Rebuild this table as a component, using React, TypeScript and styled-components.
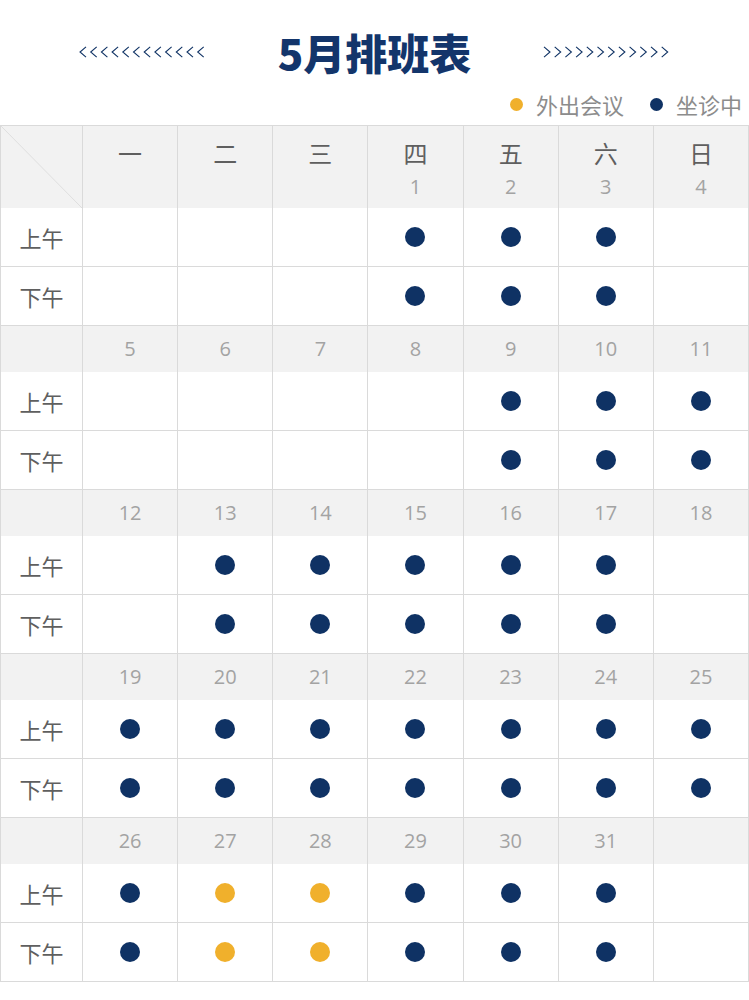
import React from 'react';
import styled, { createGlobalStyle } from 'styled-components';

const NAVY = '#0f3264';
const GOLD = '#f0b02c';
const LINE = '#dadada';
const GRAY_BG = '#f2f2f2';

const GlobalStyle = createGlobalStyle`
  html, body { margin: 0; padding: 0; background: #fff; }
  body { font-family: "Open Sans", "Noto Sans CJK SC", sans-serif; }
`;

const Page = styled.div`
  width: 749px;
`;

const TitleBar = styled.div`
  display: flex;
  justify-content: center;
  align-items: center;
  gap: 72px;
  padding-top: 22px;
  height: 60px;
`;

const Title = styled.h1`
  margin: 0;
  font-family: "Noto Sans CJK SC", sans-serif;
  font-weight: 900;
  font-size: 42px;
  line-height: 60px;
  color: #13356b;
`;

const Legend = styled.div`
  display: flex;
  justify-content: flex-end;
  align-items: center;
  gap: 26px;
  height: 28px;
  margin-top: 8px;
  padding-right: 7px;
`;

const LegendItem = styled.div`
  display: flex;
  align-items: center;
  gap: 13px;
  font-family: "Noto Sans CJK SC", sans-serif;
  font-size: 22px;
  line-height: 28px;
  color: #8c8c8c;
`;

const Dot = styled.span<{ $color: string; $size: number }>`
  display: block;
  width: ${(p) => p.$size}px;
  height: ${(p) => p.$size}px;
  border-radius: 50%;
  background: ${(p) => p.$color};
`;

const Grid = styled.div`
  margin-top: 7px;
  width: 749px;
  box-sizing: border-box;
  display: grid;
  grid-template-columns: 82px repeat(7, 1fr);
  border-left: 1px solid ${LINE};
  border-top: 1px solid ${LINE};
`;

const HeadCell = styled.div<{ $corner?: boolean }>`
  height: 82px;
  box-sizing: border-box;
  background: ${GRAY_BG};
  border-right: 1px solid ${LINE};
  display: flex;
  flex-direction: column;
  align-items: center;
  padding-top: 10px;
  ${(p) =>
    p.$corner
      ? `background-image: linear-gradient(to top right, transparent calc(50% - 0.7px), #dedede 50%, transparent calc(50% + 0.7px));`
      : ''}
`;

const Weekday = styled.span`
  font-family: "Noto Sans CJK SC", sans-serif;
  font-size: 24px;
  line-height: 34px;
  color: #5f5f5f;
`;

const DayNum = styled.span`
  font-family: "Open Sans", "Noto Sans CJK SC", sans-serif;
  font-size: 20px;
  line-height: 34px;
  color: #a3a3a3;
`;

const DateCell = styled.div`
  height: 46px;
  box-sizing: border-box;
  background: ${GRAY_BG};
  border-right: 1px solid ${LINE};
  display: flex;
  align-items: center;
  justify-content: center;
`;

const SlotCell = styled.div`
  height: 59px;
  box-sizing: border-box;
  background: #fff;
  border-right: 1px solid ${LINE};
  border-bottom: 1px solid ${LINE};
  display: flex;
  align-items: center;
  justify-content: center;
`;

const SlotLabel = styled.span`
  font-family: "Noto Sans CJK SC", sans-serif;
  font-size: 22px;
  color: #5f5f5f;
`;

const Chevrons: React.FC<{ dir: 'left' | 'right' }> = ({ dir }) => {
  const items = Array.from({ length: 12 }, (_, i) => i);
  return (
    <svg width="127" height="12" viewBox="0 0 127 12" aria-hidden="true">
      {items.map((i) => {
        const x = 0.5 + i * 10.7;
        const pts =
          dir === 'left'
            ? `${x + 6.5},0.8 ${x + 0.5},6 ${x + 6.5},11.2`
            : `${x + 0.5},0.8 ${x + 6.5},6 ${x + 0.5},11.2`;
        return <polyline key={i} points={pts} fill="none" stroke={NAVY} strokeWidth="1.1" />;
      })}
    </svg>
  );
};

type Mark = 0 | 1 | 2; // 0 none, 1 navy, 2 gold

const weekdays = ['一', '二', '三', '四', '五', '六', '日'];

const weeks: { dates: (number | null)[]; marks: Mark[] }[] = [
  { dates: [null, null, null, 1, 2, 3, 4], marks: [0, 0, 0, 1, 1, 1, 0] },
  { dates: [5, 6, 7, 8, 9, 10, 11], marks: [0, 0, 0, 0, 1, 1, 1] },
  { dates: [12, 13, 14, 15, 16, 17, 18], marks: [0, 1, 1, 1, 1, 1, 0] },
  { dates: [19, 20, 21, 22, 23, 24, 25], marks: [1, 1, 1, 1, 1, 1, 1] },
  { dates: [26, 27, 28, 29, 30, 31, null], marks: [1, 2, 2, 1, 1, 1, 0] },
];

const SlotRow: React.FC<{ label: string; marks: Mark[] }> = ({ label, marks }) => (
  <>
    <SlotCell>
      <SlotLabel>{label}</SlotLabel>
    </SlotCell>
    {marks.map((m, i) => (
      <SlotCell key={i}>{m ? <Dot $color={m === 1 ? NAVY : GOLD} $size={20} /> : null}</SlotCell>
    ))}
  </>
);

export default function App() {
  return (
    <Page>
      <GlobalStyle />
      <TitleBar>
        <Chevrons dir="left" />
        <Title>5月排班表</Title>
        <Chevrons dir="right" />
      </TitleBar>
      <Legend>
        <LegendItem>
          <Dot $color={GOLD} $size={13} />
          外出会议
        </LegendItem>
        <LegendItem>
          <Dot $color={NAVY} $size={13} />
          坐诊中
        </LegendItem>
      </Legend>
      <Grid>
        {weeks.map((w, wi) => (
          <React.Fragment key={wi}>
            {wi === 0 ? (
              <>
                <HeadCell $corner />
                {weekdays.map((d, i) => (
                  <HeadCell key={d}>
                    <Weekday>{d}</Weekday>
                    {w.dates[i] != null ? <DayNum>{w.dates[i]}</DayNum> : null}
                  </HeadCell>
                ))}
              </>
            ) : (
              <>
                <DateCell />
                {w.dates.map((d, i) => (
                  <DateCell key={i}>{d != null ? <DayNum>{d}</DayNum> : null}</DateCell>
                ))}
              </>
            )}
            <SlotRow label="上午" marks={w.marks} />
            <SlotRow label="下午" marks={w.marks} />
          </React.Fragment>
        ))}
      </Grid>
    </Page>
  );
}
